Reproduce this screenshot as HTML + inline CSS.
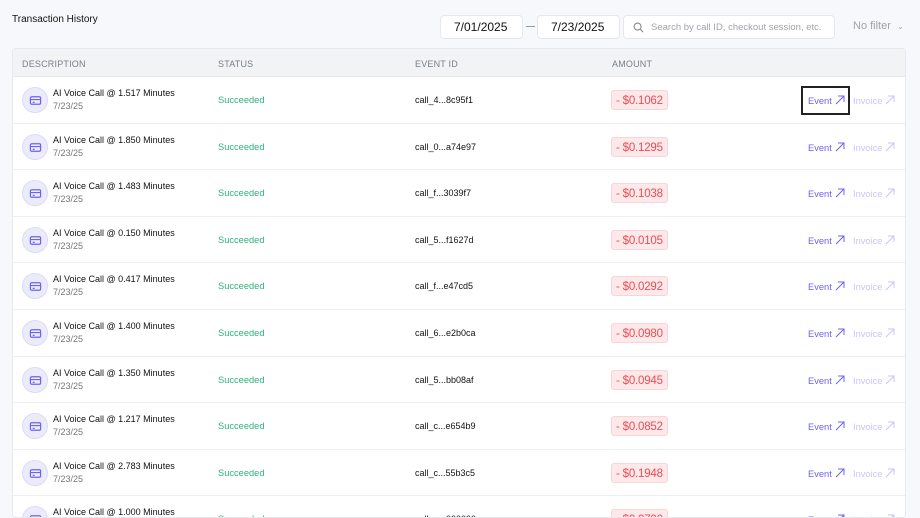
<!DOCTYPE html>
<html><head><style>
*{box-sizing:border-box;margin:0;padding:0}
body{width:920px;height:499px;overflow:hidden;background:#f7f8fb;font-family:"Liberation Sans",Arial,sans-serif;position:relative}
.title{position:absolute;left:12px;top:14px;font-size:10px;color:#111}
.box{position:absolute;top:15px;height:24px;background:#fff;border:1px solid #e6e8ee;border-radius:4px;font-size:12px;color:#111;display:flex;align-items:center}
.dash{position:absolute;left:526px;top:26px;width:9px;height:1px;background:#999}
.search{left:623px;width:212px;color:#a0a3ab;font-size:9.5px;padding-left:27px}
.nf{position:absolute;left:853px;top:20px;font-size:11px;color:#a0a3ab}
.table{position:absolute;left:12px;top:48px;width:894px;height:470px;background:#fff;border:1px solid #e8e9ee;border-radius:4px;overflow:hidden}
.head{height:28px;background:#f2f3f5;border-bottom:1px solid #e6e7eb;position:relative;font-size:9px;color:#7a7e88;letter-spacing:.2px}
.head span,.row span{position:absolute}
.row{height:46.6px;border-bottom:1px solid #eceef1;position:relative;font-size:9.3px;color:#111}
.ic{position:absolute;left:9px;top:10px;width:26px;height:26px;border-radius:50%;background:#ecebfc;border:1px solid #dcdaf8}
.ic svg{position:absolute;left:6px;top:6px}
.d1{left:40px;top:11px;font-size:9px}
.d2{left:40px;top:24px;color:#777;font-size:9px}
.st{left:205px;top:18px;color:#2fb27d}
.ev{left:402px;top:18px;font-size:9px}
.amt{left:598px;top:13px;height:20px;padding:0 4px;line-height:20px;background:#fde9ea;border:1px solid #fad4d6;border-radius:3px;color:#ee4a53;font-size:11.5px;letter-spacing:-.2px}
.e{left:795px;top:18px;color:#6c63f0}
.i{left:840px;top:18px;color:#c8c6f6}
</style></head><body>
<div class="title">Transaction History</div>
<div class="box" style="left:440px;width:83px;padding-left:13px">7/01/2025</div>
<div class="dash"></div>
<div class="box" style="left:537px;width:83px;padding-left:13px">7/23/2025</div>
<div class="box search"><svg style="position:absolute;left:9px;top:6px" width="11" height="11" viewBox="0 0 12 12"><circle cx="5" cy="5" r="3.8" fill="none" stroke="#888" stroke-width="1.2"/><path d="M8 8l3 3" stroke="#888" stroke-width="1.2"/></svg>Search by call ID, checkout session, etc.</div>
<div class="nf">No filter &nbsp;<span style="font-size:8px">⌄</span></div>
<div style="position:absolute;left:801px;top:86px;width:49px;height:29px;border:2px solid #222;z-index:3"></div>
<div class="table">
<div class="head"><span style="left:9px;top:10px">DESCRIPTION</span><span style="left:205px;top:10px">STATUS</span><span style="left:402px;top:10px">EVENT ID</span><span style="left:599px;top:10px">AMOUNT</span></div>
<div id="rows"></div>
</div>
<script>
var d=[["1.517","4...8c95f1","0.1062"],["1.850","0...a74e97","0.1295"],["1.483","f...3039f7","0.1038"],["0.150","5...f1627d","0.0105"],["0.417","f...e47cd5","0.0292"],["1.400","6...e2b0ca","0.0980"],["1.350","5...bb08af","0.0945"],["1.217","c...e654b9","0.0852"],["2.783","c...55b3c5","0.1948"],["1.000","a...000000","0.0700"]];
var h="";var arr='<svg width="10" height="10" viewBox="0 0 10 10" style="vertical-align:-1px;margin-left:3px"><path d="M1 9L9 1M3 1h6v6" fill="none" stroke="currentColor" stroke-width="1"/></svg>';
d.forEach(function(r){h+='<div class="row"><div class="ic"><svg width="13" height="13" viewBox="0 0 14 14"><rect x="1.5" y="3" width="11" height="8" rx="1.5" fill="none" stroke="#6c63f0" stroke-width="1.3"/><path d="M1.5 6h11M4 9h2" stroke="#6c63f0" stroke-width="1.3"/></svg></div><span class="d1">AI Voice Call @ '+r[0]+' Minutes</span><span class="d2">7/23/25</span><span class="st">Succeeded</span><span class="ev">call_'+r[1]+'</span><span class="amt">- $'+r[2]+'</span><span class="e">Event'+arr+'</span><span class="i">Invoice'+arr+'</span></div>'});
document.getElementById("rows").innerHTML=h;
</script>
</body></html>
